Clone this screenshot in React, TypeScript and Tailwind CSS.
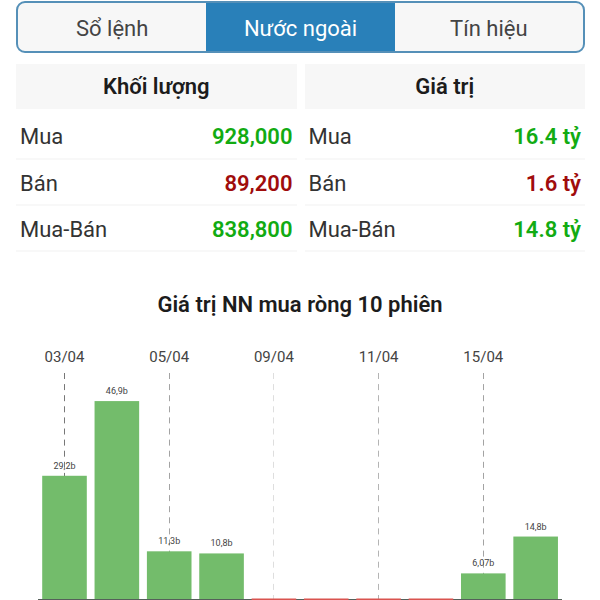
type Side = "buy" | "sell";

type Row = {
  label: string;
  value: string;
  side: Side;
};

type SummaryTableProps = {
  title: string;
  rows: Row[];
};

type Session = {
  value: number;
  label?: string;
  date?: string;
  guide?: string;
};

const tabs = ["Sổ lệnh", "Nước ngoài", "Tín hiệu"];
const activeTab = "Nước ngoài";

const volume: Row[] = [
  { label: "Mua", value: "928,000", side: "buy" },
  { label: "Bán", value: "89,200", side: "sell" },
  { label: "Mua-Bán", value: "838,800", side: "buy" },
];

const worth: Row[] = [
  { label: "Mua", value: "16.4 tỷ", side: "buy" },
  { label: "Bán", value: "1.6 tỷ", side: "sell" },
  { label: "Mua-Bán", value: "14.8 tỷ", side: "buy" },
];

// net value in billions; sessions below zero only show at the axis
const sessions: Session[] = [
  { value: 29.2, label: "29,2b", date: "03/04", guide: "#777777" },
  { value: 46.9, label: "46,9b" },
  { value: 11.3, label: "11,3b", date: "05/04", guide: "#a3a3a3" },
  { value: 10.8, label: "10,8b" },
  { value: -1, date: "09/04", guide: "#dedede" },
  { value: -1 },
  { value: -1, date: "11/04", guide: "#b4b4b4" },
  { value: -1 },
  { value: 6.07, label: "6,07b", date: "15/04", guide: "#a3a3a3" },
  { value: 14.8, label: "14,8b" },
];

function SegmentedTabs() {
  return (
    <div
      role="tablist"
      className="grid grid-cols-3 overflow-hidden rounded-[9px] border-2 border-[#5590b8] bg-[#f7f7f7]"
    >
      {tabs.map((tab) => (
        <button
          key={tab}
          type="button"
          role="tab"
          aria-selected={tab === activeTab}
          className={
            tab === activeTab
              ? "h-12 bg-[#2980b9] pt-0.5 text-[22px] text-white"
              : "h-12 pt-0.5 text-[22px] text-[#444444]"
          }
        >
          {tab}
        </button>
      ))}
    </div>
  );
}

function SummaryTable({ title, rows }: SummaryTableProps) {
  return (
    <table className="w-full">
      <caption className="pb-1">
        <span className="block bg-[#f7f7f7] pt-px text-[22px] leading-[44px] font-semibold text-[#1c1c1c]">
          {title}
        </span>
      </caption>
      <tbody>
        {rows.map((row) => (
          <tr key={row.label} className="h-[46px] border-b-2 border-[#f8f8f8] text-[22px]">
            <th scope="row" className="pt-0.5 pl-1 text-left font-normal text-[#333333]">
              {row.label}
            </th>
            <td
              className={
                row.side === "buy"
                  ? "pt-0.5 pr-1 text-right font-semibold text-[#12ab12]"
                  : "pt-0.5 pr-1 text-right font-semibold text-[#a00c0c]"
              }
            >
              {row.value}
            </td>
          </tr>
        ))}
      </tbody>
    </table>
  );
}

function NetValueChart() {
  const axis = 259;
  const scale = 4.22;

  return (
    <svg
      viewBox="0 0 600 260"
      className="block w-full"
      role="img"
      aria-label="Giá trị NN mua ròng 10 phiên"
    >
      {sessions.map((session, i) => {
        const x = 64.5 + i * 52.35;
        const top = axis - Math.max(session.value, 0) * scale;
        return (
          <g key={i} textAnchor="middle">
            {session.date && (
              <>
                <text x={x} y="22" fontSize="15" fill="#444444">
                  {session.date}
                </text>
                <path
                  d={`M${Math.round(x - 0.5) + 0.5} 33V${axis}`}
                  stroke={session.guide}
                  strokeDasharray="6 5.1"
                />
              </>
            )}
            {session.value > 0 && (
              <rect x={x - 22.3} y={top} width="44.6" height={axis - top} fill="#73bc6b" />
            )}
            {session.label && (
              <text x={x} y={top - 7} fontSize="9" fill="#444444">
                {session.label}
              </text>
            )}
          </g>
        );
      })}
      <path d="M38 259.5H562" stroke="#55605a" />
      {sessions.map((session, i) =>
        session.value < 0 ? (
          <rect key={i} x={42.2 + i * 52.35} y="258.5" width="44.6" height="1.5" fill="#d9534f" />
        ) : null,
      )}
    </svg>
  );
}

export default function App() {
  return (
    <main className="bg-white pt-px font-['Roboto','Noto_Sans',sans-serif]">
      <div className="pr-[15px] pl-4">
        <SegmentedTabs />
        <div className="mt-[11px] grid grid-cols-2 gap-2">
          <SummaryTable title="Khối lượng" rows={volume} />
          <SummaryTable title="Giá trị" rows={worth} />
        </div>
      </div>
      <h2 className="mt-[37px] mb-[19px] text-center text-[22px] leading-8 font-semibold text-[#1c1c1c]">
        Giá trị NN mua ròng 10 phiên
      </h2>
      <NetValueChart />
    </main>
  );
}
